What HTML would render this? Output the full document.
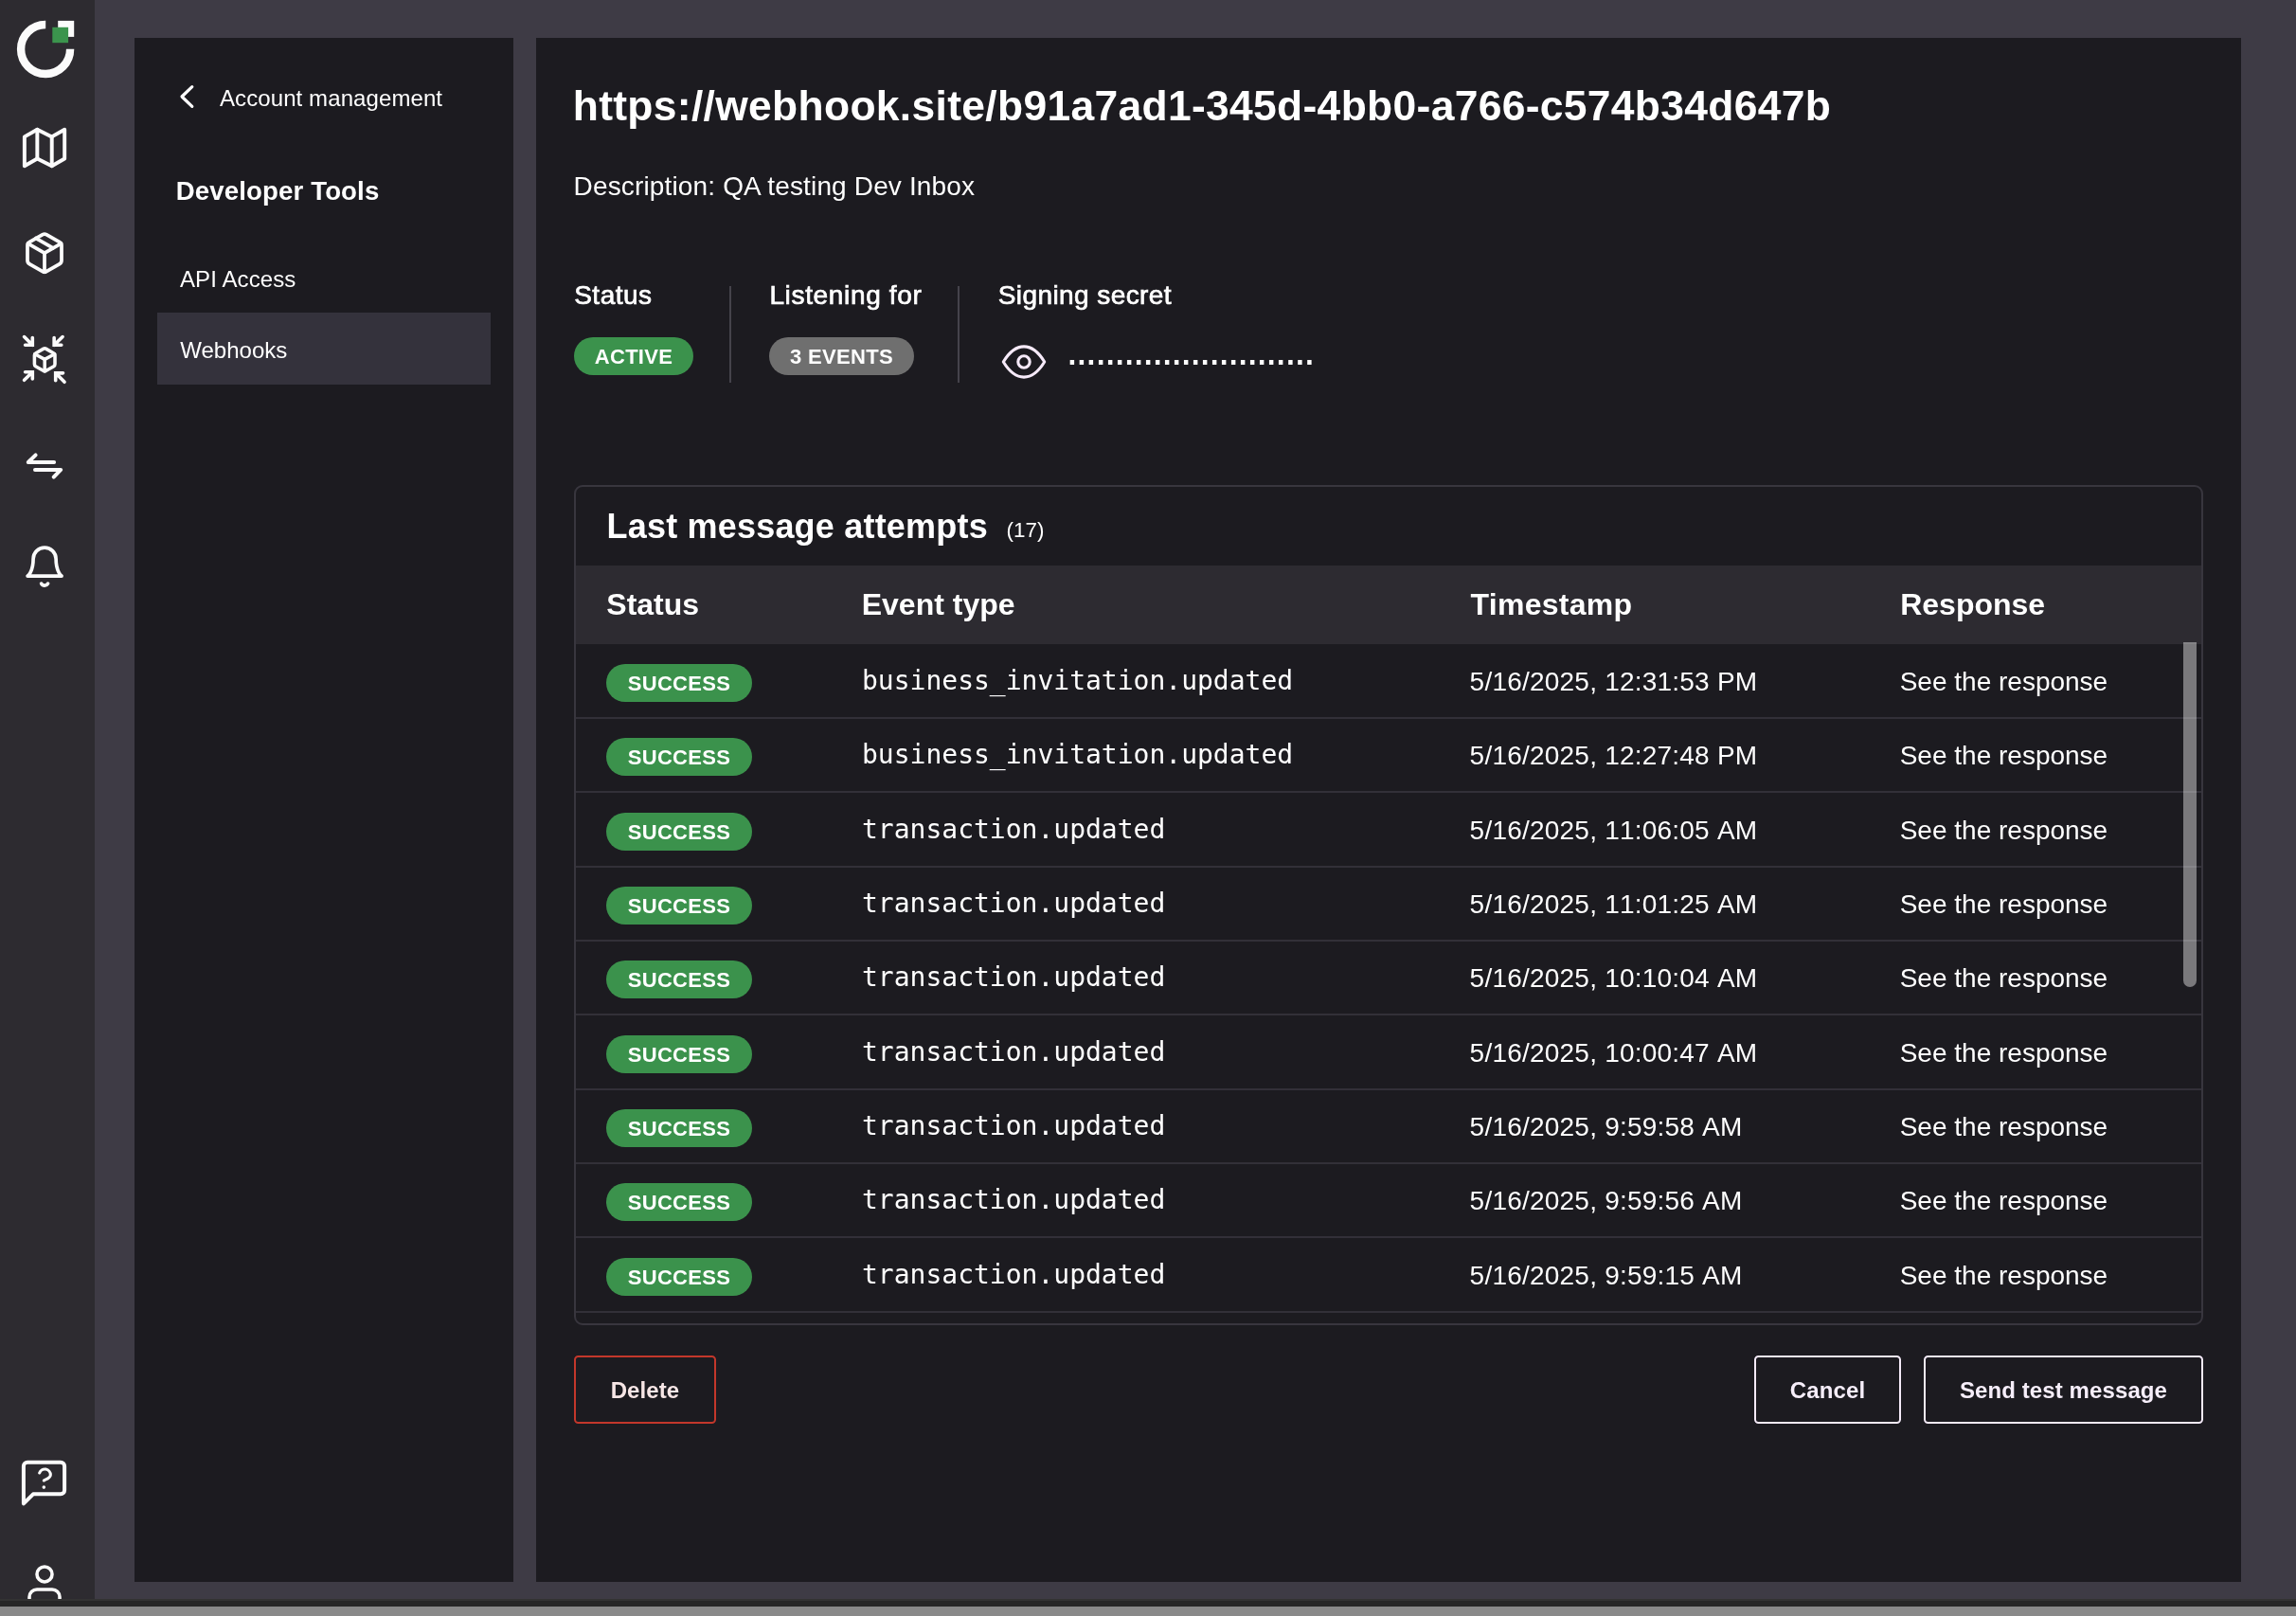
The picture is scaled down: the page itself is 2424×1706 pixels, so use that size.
<!DOCTYPE html><html lang="en"><head><meta charset="utf-8"><title>Webhook details</title><style>
*{box-sizing:border-box;margin:0;padding:0}
html,body{width:2424px;height:1706px;overflow:hidden;background:#3e3b45}
body{will-change:transform;position:relative;font-family:"Liberation Sans", "Helvetica Neue", Helvetica, Arial, sans-serif;color:#fff;-webkit-font-smoothing:antialiased}
.t{position:absolute;white-space:pre;font-family:"Liberation Sans", "Helvetica Neue", Helvetica, Arial, sans-serif}
.f-mono{font-family:"DejaVu Sans Mono", "Liberation Mono", Menlo, monospace}
.abs{position:absolute}
#rail{position:absolute;left:0;top:0;width:100px;height:1688px;background:#2d2b30;overflow:hidden}
#rail svg{position:absolute;left:0;top:0}
#side{position:absolute;left:142px;top:40px;width:400px;height:1630px;background:#1c1b20}
#main{position:absolute;left:566px;top:40px;width:1800px;height:1630px;background:#1c1b20}
#navsel{position:absolute;left:166px;top:330px;width:352px;height:76px;background:#34323c}
.badge{position:absolute;height:40px;border-radius:20px;font-weight:700;font-size:22px;line-height:40px;text-align:center;color:#fff;letter-spacing:.3px;padding-top:1px}
.green{background:#3b924c}
.grey{background:#6f6f6f}
.vline{position:absolute;width:2px;background:#45434b;top:302px;height:102px}
#card{position:absolute;left:606px;top:512px;width:1720px;height:887px;border:2px solid #38363e;border-radius:9px;overflow:hidden}
#thead{position:absolute;left:608px;top:597px;width:1716px;height:82.5px;background:#2d2b31}
.rowline{position:absolute;left:608px;width:1716px;height:2px;background:#323038}
#thumb{position:absolute;left:2305px;top:678px;width:14px;height:364px;background:rgba(255,255,255,.415);border-radius:0 0 7px 7px;z-index:3}
.btn{font-family:inherit;position:absolute;top:1431px;height:72px;border:2px solid #f4eaf8;border-radius:4.5px;font-weight:700;font-size:24px;color:#f6eefa;text-align:center;line-height:68px;padding-top:.5px;letter-spacing:.1px;background:transparent}
.btn.red{border-color:#c3372b;color:#f7e6e6}
#bar1{position:absolute;left:0;top:1688px;width:2424px;height:8px;background:#262626;border-top:2px solid #333}
#bar2{position:absolute;left:0;top:1696px;width:2424px;height:10px;background:#898989}
</style></head><body>
<nav id="rail">
<svg width="100" height="1706" viewBox="0 0 100 1706" fill="none" stroke="#fbfbfb" stroke-linecap="round" stroke-linejoin="round">
<!-- logo -->
<path d="M48.2 26 A26 26 0 1 0 74.1 51.8" stroke-width="8.4" stroke-linecap="butt"/>
<rect x="61.2" y="21.9" width="17" height="17" fill="#fbfbfb" stroke="none"/>
<rect x="55.3" y="28.8" width="16.8" height="16.4" fill="#3b944d" stroke="none"/>
<!-- map -->
<g transform="translate(23.95 132.86) scale(1.923)" stroke-width="2.05">
<polygon points="1 6 1 22 8 18 16 22 23 18 23 2 16 6 8 2 1 6"/><line x1="8" y1="2" x2="8" y2="18"/><line x1="16" y1="6" x2="16" y2="22"/>
</g>
<!-- package -->
<g transform="translate(23 243.1) scale(2)" stroke-width="1.88">
<line x1="16.5" y1="9.4" x2="7.5" y2="4.21"/><path d="M21 16V8a2 2 0 0 0-1-1.73l-7-4a2 2 0 0 0-2 0l-7 4A2 2 0 0 0 3 8v8a2 2 0 0 0 1 1.73l7 4a2 2 0 0 0 2 0l7-4A2 2 0 0 0 21 16z"/><polyline points="3.27 6.96 12 12.01 20.73 6.96"/><line x1="12" y1="22.08" x2="12" y2="12"/>
</g>
<!-- cube with arrows -->
<g transform="translate(32.8 365.4) scale(1.2)" stroke-width="2.95">
<path d="M21 16V8a2 2 0 0 0-1-1.73l-7-4a2 2 0 0 0-2 0l-7 4A2 2 0 0 0 3 8v8a2 2 0 0 0 1 1.73l7 4a2 2 0 0 0 2 0l7-4A2 2 0 0 0 21 16z"/><polyline points="3.27 6.96 12 11.6 20.73 6.96"/><line x1="12" y1="22.08" x2="12" y2="11.6"/>
</g>
<g stroke-width="3.6" stroke-linejoin="miter">
<path d="M25.55 355.55 L34.3 364.3 M26.6 364.3 H34.3 V356.6"/>
<path d="M66.1 355.55 L57.15 364.3 M64.8 364.3 H57.15 V356.6"/>
<path d="M25.55 401.3 L34.3 392.8 M26.6 392.8 H34.3 V400"/>
<path d="M68.05 403.25 L58.7 393.85 M66.55 393.85 H58.7 V401.75"/>
</g>
<!-- swap -->
<g stroke-width="4">
<path d="M37.6 480.3 L29.8 488 H57.1"/>
<path d="M56.7 503.6 L64.2 495.9 H37"/>
</g>
<!-- bell -->
<g transform="translate(23.1 574.1) scale(2)" stroke-width="1.85">
<path d="M18 8A6 6 0 0 0 6 8c0 7-3 9-3 9h18s-3-2-3-9"/><path d="M13.73 21a2 2 0 0 1-3.46 0"/>
</g>
<!-- chat help -->
<path d="M68.1 1573.2 a4.1 4.1 0 0 1 -4.1 4.1 H35 L24.9 1587.3 V1547.8 a4.1 4.1 0 0 1 4.1 -4.1 H64 a4.1 4.1 0 0 1 4.1 4.1 Z" stroke-width="4"/>
<g transform="translate(23.5 1537) scale(2)" stroke-width="1.55"><path d="M9.09 9a3 3 0 0 1 5.83 1c0 2-3.3 2.6-3.5 3"/></g>
<circle cx="46.3" cy="1570.1" r="1.8" fill="#fbfbfb" stroke="none"/>
<!-- user -->
<g transform="translate(23.02 1647.95) scale(2)" stroke-width="1.78">
<path d="M20 21v-2a4 4 0 0 0-4-4H8a4 4 0 0 0-4 4v2"/><circle cx="12" cy="7" r="4"/>
</g>
</svg>
</nav>
<aside><div id="side"></div>
<svg class="abs" style="left:186px;top:86px" width="24" height="32" viewBox="0 0 24 32" fill="none" stroke="#fff" stroke-width="3.2" stroke-linecap="round" stroke-linejoin="round"><path d="M16.8 5.6 L6 16 L16.8 26.4"/></svg>
<div class="t" style="left:232.00px;top:89.08px;font-size:24px;line-height:30px;letter-spacing:0.09px;">Account management</div>
<div class="t" style="left:185.80px;top:184.94px;font-size:27.6px;line-height:34px;font-weight:700;letter-spacing:0.13px;">Developer Tools</div>
<div class="t" style="left:190.00px;top:279.58px;font-size:24px;line-height:30px;letter-spacing:0.1px;">API Access</div>
<div id="navsel"></div>
<div class="t" style="left:190.30px;top:355.18px;font-size:24px;line-height:30px;">Webhooks</div>
</aside>
<main><div id="main"></div>
<h1 class="t" style="left:604.70px;top:83.72px;font-size:44.4px;line-height:56px;font-weight:700;letter-spacing:0.325px;">https://webhook.site/b91a7ad1-345d-4bb0-a766-c574b34d647b</h1>
<div class="t" style="left:605.60px;top:179.20px;font-size:28px;line-height:35px;letter-spacing:0.15px;">Description: QA testing Dev Inbox</div>
<div class="t" style="left:606.20px;top:294.40px;font-size:28px;line-height:35px;letter-spacing:0.5px;-webkit-text-stroke:.7px #fff;">Status</div>
<div class="t" style="left:812.40px;top:294.40px;font-size:28px;line-height:35px;letter-spacing:0.66px;-webkit-text-stroke:.7px #fff;">Listening for</div>
<div class="t" style="left:1053.70px;top:294.40px;font-size:28px;line-height:35px;letter-spacing:0.42px;-webkit-text-stroke:.7px #fff;">Signing secret</div>
<div class="badge green" style="left:606px;top:356px;width:126px">ACTIVE</div>
<div class="vline" style="left:770px"></div>
<div class="badge grey" style="left:812px;top:356px;width:153px">3 EVENTS</div>
<div class="vline" style="left:1011px"></div>
<svg class="abs" style="left:1054px;top:358px" width="54" height="48" viewBox="1054 358 54 48" fill="none" stroke="#f6eaf9" stroke-width="3.1" stroke-linecap="round" stroke-linejoin="round"><path d="M1059.3 382 C1066 371 1073 365.9 1081 365.9 C1089 365.9 1096 371 1102.7 382 C1096 393 1089 398.1 1081 398.1 C1073 398.1 1066 393 1059.3 382 Z"/><circle cx="1081" cy="382" r="6.2"/></svg>
<div class="t  secret" style="left:1125.60px;top:340.26px;font-size:46px;line-height:58px;letter-spacing:-2.768px;">..........................</div>
<section><div id="card"></div>
<h2 class="t" style="left:640.50px;top:532.93px;font-size:36px;line-height:45px;font-weight:700;letter-spacing:0.2px;">Last message attempts</h2>
<div class="t" style="left:1062.60px;top:546.44px;font-size:22.4px;line-height:28px;">(17)</div>
<div id="thead"></div>
<div class="t" style="left:640.30px;top:618.41px;font-size:32px;line-height:40px;font-weight:700;">Status</div>
<div class="t" style="left:909.70px;top:618.41px;font-size:32px;line-height:40px;font-weight:700;">Event type</div>
<div class="t" style="left:1552.60px;top:618.41px;font-size:32px;line-height:40px;font-weight:700;letter-spacing:0.25px;">Timestamp</div>
<div class="t" style="left:2006.20px;top:618.41px;font-size:32px;line-height:40px;font-weight:700;">Response</div>
<div class="row">
<div class="badge green" style="left:640px;top:701px;width:154px">SUCCESS</div>
<div class="t f-mono" style="left:910.00px;top:701.01px;font-size:28px;line-height:35px;">business_invitation.updated</div>
<div class="t" style="left:1551.60px;top:701.80px;font-size:28px;line-height:35px;letter-spacing:0.22px;font-kerning:none;">5/16/2025, 12:31:53 PM</div>
<div class="t" style="left:2005.70px;top:701.80px;font-size:28px;line-height:35px;">See the response</div>
<div class="rowline" style="top:757px"></div></div>
<div class="row">
<div class="badge green" style="left:640px;top:779px;width:154px">SUCCESS</div>
<div class="t f-mono" style="left:910.00px;top:779.01px;font-size:28px;line-height:35px;">business_invitation.updated</div>
<div class="t" style="left:1551.60px;top:779.80px;font-size:28px;line-height:35px;letter-spacing:0.22px;font-kerning:none;">5/16/2025, 12:27:48 PM</div>
<div class="t" style="left:2005.70px;top:779.80px;font-size:28px;line-height:35px;">See the response</div>
<div class="rowline" style="top:835px"></div></div>
<div class="row">
<div class="badge green" style="left:640px;top:858px;width:154px">SUCCESS</div>
<div class="t f-mono" style="left:910.00px;top:858.01px;font-size:28px;line-height:35px;">transaction.updated</div>
<div class="t" style="left:1551.60px;top:858.80px;font-size:28px;line-height:35px;letter-spacing:0.22px;font-kerning:none;">5/16/2025, 11:06:05 AM</div>
<div class="t" style="left:2005.70px;top:858.80px;font-size:28px;line-height:35px;">See the response</div>
<div class="rowline" style="top:914px"></div></div>
<div class="row">
<div class="badge green" style="left:640px;top:936px;width:154px">SUCCESS</div>
<div class="t f-mono" style="left:910.00px;top:936.01px;font-size:28px;line-height:35px;">transaction.updated</div>
<div class="t" style="left:1551.60px;top:936.80px;font-size:28px;line-height:35px;letter-spacing:0.22px;font-kerning:none;">5/16/2025, 11:01:25 AM</div>
<div class="t" style="left:2005.70px;top:936.80px;font-size:28px;line-height:35px;">See the response</div>
<div class="rowline" style="top:992px"></div></div>
<div class="row">
<div class="badge green" style="left:640px;top:1014px;width:154px">SUCCESS</div>
<div class="t f-mono" style="left:910.00px;top:1014.01px;font-size:28px;line-height:35px;">transaction.updated</div>
<div class="t" style="left:1551.60px;top:1014.80px;font-size:28px;line-height:35px;letter-spacing:0.22px;font-kerning:none;">5/16/2025, 10:10:04 AM</div>
<div class="t" style="left:2005.70px;top:1014.80px;font-size:28px;line-height:35px;">See the response</div>
<div class="rowline" style="top:1070px"></div></div>
<div class="row">
<div class="badge green" style="left:640px;top:1093px;width:154px">SUCCESS</div>
<div class="t f-mono" style="left:910.00px;top:1093.01px;font-size:28px;line-height:35px;">transaction.updated</div>
<div class="t" style="left:1551.60px;top:1093.80px;font-size:28px;line-height:35px;letter-spacing:0.22px;font-kerning:none;">5/16/2025, 10:00:47 AM</div>
<div class="t" style="left:2005.70px;top:1093.80px;font-size:28px;line-height:35px;">See the response</div>
<div class="rowline" style="top:1149px"></div></div>
<div class="row">
<div class="badge green" style="left:640px;top:1171px;width:154px">SUCCESS</div>
<div class="t f-mono" style="left:910.00px;top:1171.01px;font-size:28px;line-height:35px;">transaction.updated</div>
<div class="t" style="left:1551.60px;top:1171.80px;font-size:28px;line-height:35px;letter-spacing:0.22px;font-kerning:none;">5/16/2025, 9:59:58 AM</div>
<div class="t" style="left:2005.70px;top:1171.80px;font-size:28px;line-height:35px;">See the response</div>
<div class="rowline" style="top:1227px"></div></div>
<div class="row">
<div class="badge green" style="left:640px;top:1249px;width:154px">SUCCESS</div>
<div class="t f-mono" style="left:910.00px;top:1249.01px;font-size:28px;line-height:35px;">transaction.updated</div>
<div class="t" style="left:1551.60px;top:1249.80px;font-size:28px;line-height:35px;letter-spacing:0.22px;font-kerning:none;">5/16/2025, 9:59:56 AM</div>
<div class="t" style="left:2005.70px;top:1249.80px;font-size:28px;line-height:35px;">See the response</div>
<div class="rowline" style="top:1305px"></div></div>
<div class="row">
<div class="badge green" style="left:640px;top:1328px;width:154px">SUCCESS</div>
<div class="t f-mono" style="left:910.00px;top:1328.01px;font-size:28px;line-height:35px;">transaction.updated</div>
<div class="t" style="left:1551.60px;top:1328.80px;font-size:28px;line-height:35px;letter-spacing:0.22px;font-kerning:none;">5/16/2025, 9:59:15 AM</div>
<div class="t" style="left:2005.70px;top:1328.80px;font-size:28px;line-height:35px;">See the response</div>
<div class="rowline" style="top:1384px"></div></div>
<div id="thumb"></div></section>
<button class="btn red" style="left:606px;width:150px">Delete</button>
<button class="btn" style="left:1852px;width:155px">Cancel</button>
<button class="btn" style="left:2031px;width:295px">Send test message</button>
</main>
<footer><div id="bar1"></div><div id="bar2"></div></footer>
</body></html>
